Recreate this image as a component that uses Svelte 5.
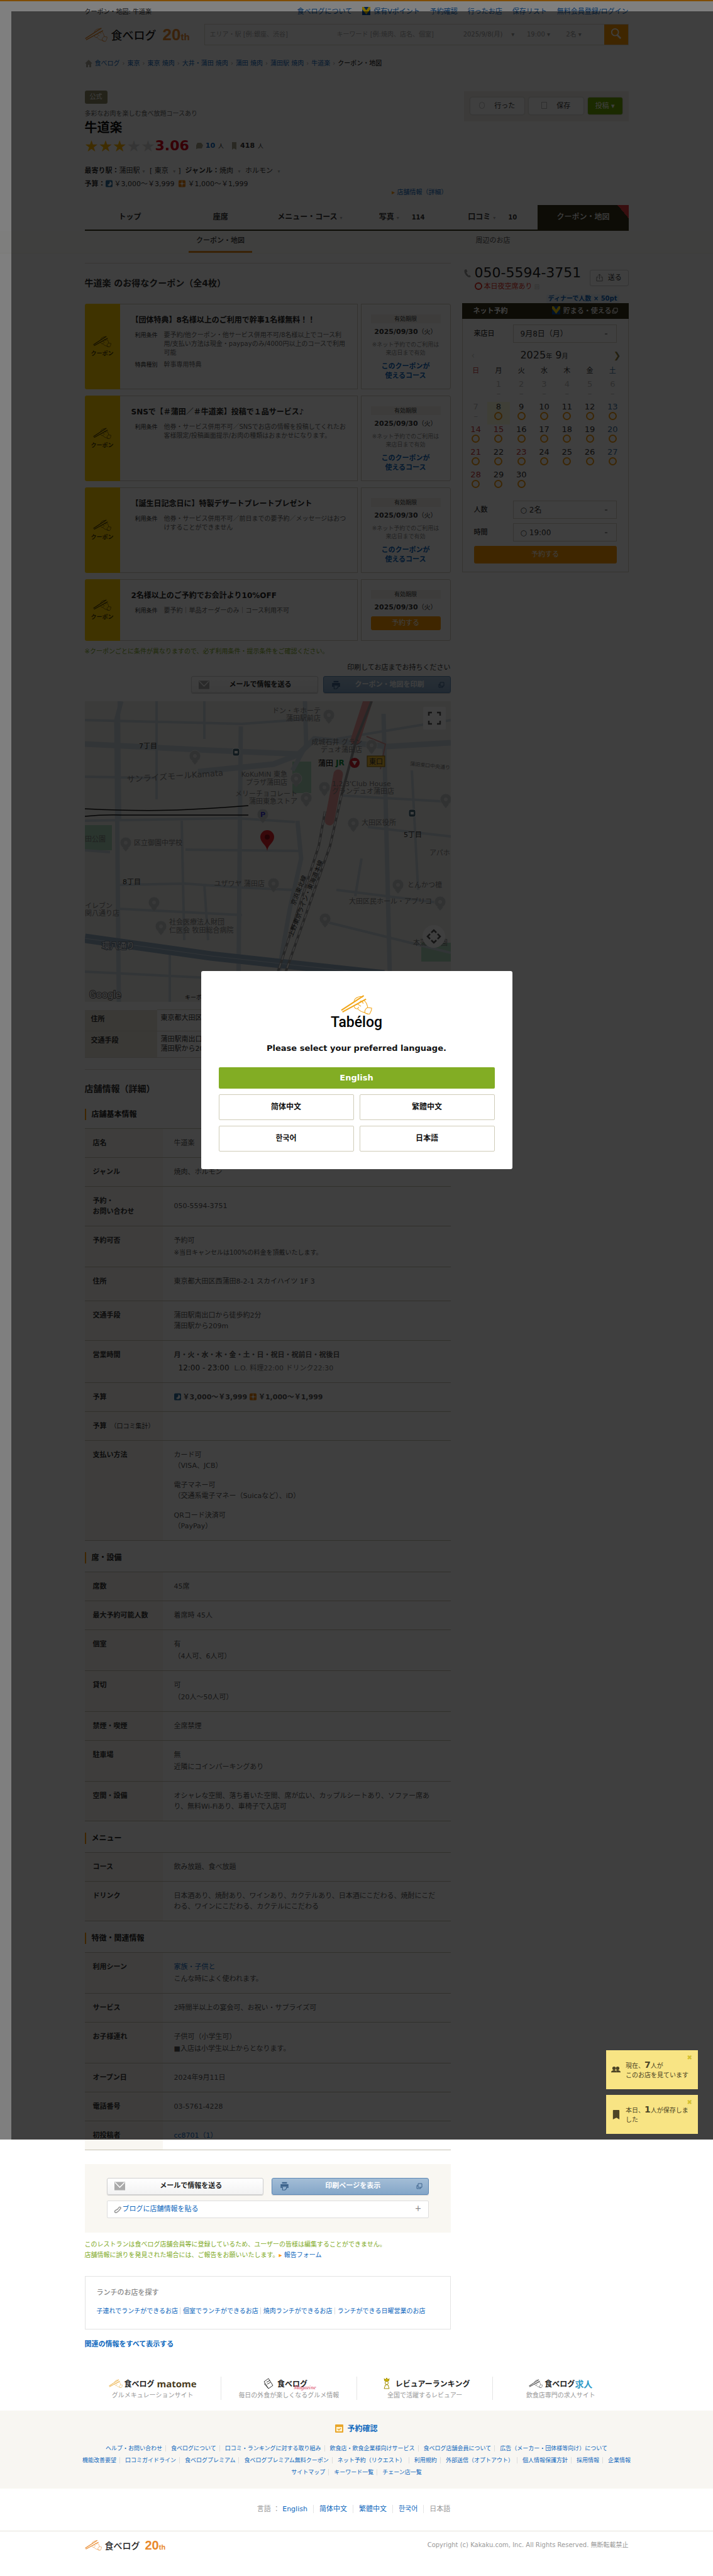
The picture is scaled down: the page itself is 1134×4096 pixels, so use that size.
<script>
	const topLinks = ['保有Vポイント', '予約確認', '行ったお店', '保存リスト', '無料会員登録/ログイン']
	const crumbs = ['食べログ', '東京', '東京 焼肉', '大井・蒲田 焼肉', '蒲田 焼肉', '蒲田駅 焼肉', '牛道楽']
	const tabs = [
		{ label: 'トップ' },
		{ label: '座席' },
		{ label: 'メニュー・コース', dot: true },
		{ label: '写真', dot: true, count: 114 },
		{ label: '口コミ', dot: true, count: 10 },
		{ label: 'クーポン・地図', active: true }
	]
	const coupons = [
		{
			title: '【団体特典】8名様以上のご利用で幹事1名様無料！！',
			text: '要予約/他クーポン・他サービス併用不可/8名様以上でコース利\n用/支払い方法は現金・paypayのみ/4000円以上のコースで利用\n可能',
			kind: '幹事専用特典'
		},
		{
			title: 'SNSで【＃蒲田／＃牛道楽】投稿で１品サービス♪',
			text: '他券・サービス併用不可／SNSでお店の情報を投稿してくれたお\n客様限定/投稿画面提示/お肉の種類はおまかせになります。'
		},
		{
			title: '【誕生日記念日に】特製デザートプレートプレゼント',
			text: '他券・サービス併用不可／前日までの要予約／メッセージはおつ\nけすることができません'
		},
		{
			title: '2名様以上のご予約でお会計より10%OFF',
			text: '要予約｜単品オーダーのみ｜コース利用不可',
			reserve: true
		}
	]
	const weekdays = ['日', '月', '火', '水', '木', '金', '土']
	const weeks = [
		[0, 1, 2, 3, 4, 5, 6],
		[7, 8, 9, 10, 11, 12, 13],
		[14, 15, 16, 17, 18, 19, 20],
		[21, 22, 23, 24, 25, 26, 27],
		[28, 29, 30, 0, 0, 0, 0]
	]
	const holidays = [15, 23]

	const sections = [
		{
			title: '店舗基本情報',
			rows: [
				{ th: '店名', lines: ['牛道楽'] },
				{ th: 'ジャンル', lines: ['焼肉、ホルモン'] },
				{ th: '予約・\nお問い合わせ', lines: ['050-5594-3751'], middle: true },
				{ th: '予約可否', lines: ['予約可'], note: '※当日キャンセルは100%の料金を頂戴いたします。', small: true },
				{ th: '住所', lines: ['東京都大田区西蒲田8-2-1 スカイハイツ 1F 3'], tall: true },
				{ th: '交通手段', lines: ['蒲田駅南出口から徒歩約2分\n蒲田駅から209m'] },
				{ th: '営業時間', hours: true },
				{ th: '予算', budget: true },
				{ th: '予算', sub: '（口コミ集計）', lines: [] },
				{
					th: '支払い方法',
					lines: ['カード可\n（VISA、JCB）', '電子マネー可\n（交通系電子マネー（Suicaなど）、iD）', 'QRコード決済可\n（PayPay）']
				}
			]
		},
		{
			title: '席・設備',
			rows: [
				{ th: '席数', lines: ['45席'] },
				{ th: '最大予約可能人数', lines: ['着席時 45人'] },
				{ th: '個室', lines: ['有'], note: '（4人可、6人可）' },
				{ th: '貸切', lines: ['可'], note: '（20人～50人可）' },
				{ th: '禁煙・喫煙', lines: ['全席禁煙'] },
				{ th: '駐車場', lines: ['無'], note: '近隣にコインパーキングあり' },
				{ th: '空間・設備', lines: ['オシャレな空間、落ち着いた空間、席が広い、カップルシートあり、ソファー席あ\nり、無料Wi-Fiあり、車椅子で入店可'] }
			]
		},
		{
			title: 'メニュー',
			rows: [
				{ th: 'コース', lines: ['飲み放題、食べ放題'] },
				{ th: 'ドリンク', lines: ['日本酒あり、焼酎あり、ワインあり、カクテルあり、日本酒にこだわる、焼酎にこだ\nわる、ワインにこだわる、カクテルにこだわる'] }
			]
		},
		{
			title: '特徴・関連情報',
			rows: [
				{ th: '利用シーン', link: '家族・子供と', note: 'こんな時によく使われます。' },
				{ th: 'サービス', lines: ['2時間半以上の宴会可、お祝い・サプライズ可'] },
				{ th: 'お子様連れ', lines: ['子供可（小学生可）'], note: '■入店は小学生以上からとなります。' },
				{ th: 'オープン日', lines: ['2024年9月11日'] },
				{ th: '電話番号', lines: ['03-5761-4228'] },
				{ th: '初投稿者', link: 'cc8701（1）' }
			]
		}
	]

	const labels = [
		{ x: 375, y: 19, text: 'ドン・キホーテ', end: true },
		{ x: 375, y: 31, text: '蒲田駅前店', end: true },
		{ x: 441, y: 69, text: '成城石井 グラン', end: true },
		{ x: 441, y: 81, text: 'デュオ蒲田店', end: true },
		{ x: 86, y: 75, text: '7丁目', dark: true },
		{ x: 322, y: 120, text: 'KoKuMiN 東急', end: true },
		{ x: 322, y: 133, text: 'プラザ蒲田店', end: true },
		{ x: 393, y: 135, text: "1,2,3'Club House" },
		{ x: 393, y: 147, text: 'グランデュオ蒲田店' },
		{ x: 338, y: 151, text: 'メリーチョコレート', end: true },
		{ x: 338, y: 163, text: '蒲田東急ストア', end: true },
		{ x: 440, y: 197, text: '大田区役所' },
		{ x: 507, y: 216, text: '5丁目', dark: true },
		{ x: 0, y: 223, text: '田公園' },
		{ x: 78, y: 229, text: '区立御園中学校' },
		{ x: 548, y: 245, text: 'アパホ' },
		{ x: 60, y: 291, text: '8丁目', dark: true },
		{ x: 286, y: 294, text: 'ユザワヤ 蒲田店', end: true },
		{ x: 513, y: 296, text: 'とんかつ檍' },
		{ x: 552, y: 322, text: '大田区民ホール・アプリコ', end: true },
		{ x: 0, y: 329, text: 'イレブン' },
		{ x: 0, y: 341, text: '関八通り店' },
		{ x: 134, y: 355, text: '社会医療法人財団' },
		{ x: 134, y: 368, text: '仁医会 牧田総合病院' },
		{ x: 27, y: 393, text: '環八通り', light: true },
		{ x: 522, y: 388, text: '本蒲田公園' }
	]
	const pins = [[388, 22], [456, 70], [175, 87], [336, 123], [381, 137], [352, 154], [427, 194], [65, 225], [300, 290], [498, 292], [565, 319], [110, 320], [382, 346], [121, 358], [574, 156], [283, 180]]

	const lunch = ['子連れでランチができるお店', '個室でランチができるお店', '焼肉ランチができるお店', 'ランチができる日曜営業のお店']
	const footLinks = [
		['ヘルプ・お問い合わせ', '食べログについて', '口コミ・ランキングに対する取り組み', '飲食店・飲食企業様向けサービス', '食べログ店舗会員について', '広告（メーカー・団体様等向け）について'],
		['機能改善要望', '口コミガイドライン', '食べログプレミアム', '食べログプレミアム無料クーポン', 'ネット予約（リクエスト）', '利用規約', '外部送信（オプトアウト）', '個人情報保護方針', '採用情報', '企業情報'],
		['サイトマップ', 'キーワード一覧', 'チェーン店一覧']
	]
	const langs = ['English', '简体中文', '繁體中文', '한국어']

	function dayClass(day, i) {
		if (day < 8) return 'past'
		if (i === 0 || holidays.includes(day)) return 'sun'
		return i === 6 ? 'sat' : ''
	}
</script>

{#snippet hand(cls)}
	<svg class={cls} viewBox="0 0 56 34" aria-hidden="true" fill="none" stroke="currentColor">
		<path stroke-width="2.4" d="M1 27 41 1M3 30 45 7" />
		<path stroke-width="1.2" d="M24 12c-1-3 2-7 6-8 4-2 8-2 9 0M41 9c4 3 6 7 7 13M27 17l3-1 6 4M24 20c0 3 3 5 6 4l2-3M30 24c5 6 9 6 12 7l6 3M48 22c-3 1-6 5-5 9M48 22l7 1c0 4-2 8-4 11l-8-2M34 11c3-1 5 1 6 4" />
	</svg>
{/snippet}

{#snippet brand(cls)}
	<span class="brand {cls}">
		{@render hand('hand')}
		<span class="brand-name">食べログ</span>
		<span class="years">20<small>th</small></span>
	</span>
{/snippet}

{#snippet moon()}
	<svg class="mini" viewBox="0 0 12 12" aria-hidden="true"><rect width="12" height="12" rx="2" fill="#2d6f9e" /><path d="M7 2a4 4 0 1 1-4 6c3 0 5-3 4-6z" fill="#fff" /></svg>
{/snippet}

{#snippet sun()}
	<svg class="mini" viewBox="0 0 12 12" aria-hidden="true"><rect width="12" height="12" rx="2" fill="#e8820c" /><circle cx="6" cy="6" r="2" fill="#fff" /><path d="M6 1v10M1 6h10" stroke="#fff" /></svg>
{/snippet}

{#snippet vmark()}
	<svg class="vmark" viewBox="0 0 14 14" aria-hidden="true"><rect width="14" height="14" fill="#0a4da2" /><path d="M0 0h3l4 6 4-6h3v4l-7 9-7-9z" fill="#ffd400" /></svg>
{/snippet}

{#snippet popup()}
	<svg class="popup" viewBox="0 0 10 10" aria-hidden="true" fill="none" stroke="currentColor"><path d="M3 1h6v6H3zM3 4H1v5h6V7" /></svg>
{/snippet}

{#snippet mailButton()}
	<button class="btn mail" type="button">
		<svg viewBox="0 0 18 14" aria-hidden="true"><rect width="18" height="14" fill="#aaa" /><path d="m1 1 8 8 8-8" fill="none" stroke="#fff" stroke-width="1.5" /></svg>
		<span>メールで情報を送る</span>
	</button>
{/snippet}

{#snippet printButton(label)}
	<button class="btn print" type="button">
		<svg viewBox="0 0 18 18" aria-hidden="true" fill="#3c638c"><path d="M4 1h10v3H4zM1 5h16v8h-3V9H4v4H1z" /><path d="M5 10h8v4l-3 3H5z" fill="none" stroke="#3c638c" stroke-width="1.5" /></svg>
		<span>{label}</span>
		{@render popup()}
	</button>
{/snippet}

<div class="page">
	<header class="wrap">
		<div class="top">
			<span>クーポン・地図: 牛道楽</span>
			<nav>
				<a href="#about">食べログについて</a>
				{#each topLinks as link, i}
					<a href="#top{i}">{#if i === 0}{@render vmark()}{/if}{link}</a>
				{/each}
			</nav>
		</div>
		<div class="head">
			<a href="#home" aria-label="食べログ">{@render brand('')}</a>
			<form class="search">
				<input class="area" aria-label="エリア・駅" placeholder="エリア・駅 [例:銀座、渋谷]" />
				<input class="word" aria-label="キーワード" placeholder="キーワード [例:焼肉、店名、個室]" />
				<button type="button" class="date">2025/9/8(月)<i>▾</i></button>
				<button type="button" class="time">19:00 <i>▾</i></button>
				<button type="button" class="num">2名 <i>▾</i></button>
				<button type="submit" class="go" aria-label="検索">
					<svg viewBox="0 0 20 20" aria-hidden="true" fill="none" stroke="#fff" stroke-width="2"><circle cx="8" cy="8" r="6" /><path d="m12 13 6 6" stroke-width="3" /></svg>
				</button>
			</form>
		</div>
		<nav class="crumbs">
			<svg viewBox="0 0 12 12" aria-hidden="true"><path d="M6 0 0 6h2v6h3V8h2v4h3V6h2z" fill="#a8a499" /></svg>
			{#each crumbs as crumb, i}
				<a href="#crumb{i}">{crumb}</a><i>›</i>
			{/each}
			<b>クーポン・地図</b>
		</nav>

		<div class="shop">
			<div class="shop-main">
				<span class="badge">公式</span>
				<p class="catch">多彩なお肉を楽しむ食べ放題コースあり</p>
				<h1>牛道楽</h1>
				<div class="rating">
					<span class="stars">★★★<i>★★</i></span>
					<b class="score">3.06</b>
					<svg viewBox="0 0 12 12" aria-hidden="true"><path d="M3 1h6l3 4-2 5H4l-3 1V5z" fill="#a5a28a" /></svg>
					<a href="#reviews">10</a><small>人</small>
					<svg viewBox="0 0 12 12" aria-hidden="true"><path d="M3 0h7v12L6 10l-3 2z" fill="#a5a28a" /></svg>
					<strong>418</strong><small>人</small>
				</div>
				<p class="fact"><b>最寄り駅：</b>蒲田駅<i>▾</i> [ 東京 <i>▾</i>] &nbsp;<b>ジャンル：</b>焼肉 <i>▾</i> ホルモン <i>▾</i></p>
				<div class="fact-row">
					<p class="fact"><b>予算：</b>{@render moon()}￥3,000～￥3,999 &nbsp;{@render sun()}￥1,000～￥1,999</p>
					<a class="detail" href="#detail"><i>▸</i> 店舗情報（詳細）</a>
				</div>
			</div>
			<div class="acts">
				<button type="button"><span class="ok"></span>行った</button>
				<button type="button"><span class="mark"></span>保存</button>
				<button type="button" class="post">投稿 ▾</button>
			</div>
		</div>

		<nav class="tabs">
			{#each tabs as tab, i}
				<a href="#tab{i}" class:active={tab.active}>
					{tab.label}{#if tab.dot}<i>▾</i>{/if}{#if tab.count}<small>{tab.count}</small>{/if}
				</a>
			{/each}
		</nav>
	</header>

	<div class="subnav">
		<nav class="wrap">
			<a class="current" href="#coupon">クーポン・地図</a>
			<a class="near" href="#near">周辺のお店</a>
		</nav>
	</div>

	<div class="wrap cols">
		<main>
			<h2 class="coupon-head">牛道楽 のお得なクーポン（全4枚）</h2>
			<div class="coupons">
				{#each coupons as coupon}
					<article class="coupon">
						<div class="stub">{@render hand('hand')}<b>クーポン</b></div>
						<div class="terms">
							<h3>{coupon.title}</h3>
							<dl>
								<dt>利用条件</dt>
								<dd>{coupon.text}</dd>
								{#if coupon.kind}
									<dt>特典種別</dt>
									<dd>{coupon.kind}</dd>
								{/if}
							</dl>
						</div>
						<div class="limit">
							<span class="limit-label">有効期限</span>
							<p class="until"><b>2025/09/30</b>（火）</p>
							{#if coupon.reserve}
								<button type="button" class="orange">予約する</button>
							{:else}
								<p class="until-note">※ネット予約でのご利用は<br />来店日まで有効</p>
								<a href="#course">このクーポンが<br />使えるコース</a>
							{/if}
						</div>
					</article>
				{/each}
			</div>
			<p class="caution">※クーポンごとに条件が異なりますので、必ず利用条件・提示条件をご確認ください。</p>
			<p class="bring">印刷してお店までお持ちください</p>
			<div class="tools">
				{@render mailButton()}
				{@render printButton('クーポン・地図を印刷')}
			</div>

			<div class="map">
				<svg viewBox="0 0 582 478" preserveAspectRatio="xMidYMid slice">
					<rect width="582" height="478" fill="#eeede9" />
					<path d="M0 197h43v40H0zM330 96h30v50h-30zM535 384h47v30h-47z" fill="#a9d6b8" />
					<g fill="none" stroke="#cbd5dc">
						<path stroke-width="9" d="M0 68 200 78 340 84 365 60 480 72 582 66M342 84 300 100 180 112" />
						<path stroke-width="7" d="M58 0 50 30 54 478M475 20 486 478M350 0 352 70 330 110M338 190 344 250 326 330 300 478M248 40 244 478" />
						<path stroke-width="4" d="M0 30 250 36 360 28M114 0V156M0 120 114 122M190 0V60M154 190 158 380M0 237 40 240M160 236 340 238M54 292 160 290 245 296 330 300M190 292 196 380M54 330 250 340M0 190 240 186 334 192M400 60 582 30M410 150 582 160M450 200 582 215M440 250 430 310M400 300 560 320M380 350 582 400M0 430 300 445M135 400V478M54 0 56 190M520 110 530 300" />
					</g>
					<path d="m0 377 200 28 276 30" fill="none" stroke="#96adc2" stroke-width="15" />
					<path d="m0 377 200 28 276 30" fill="none" stroke="#c5d2de" stroke-width="1" />
					<path d="M450 0 430 62M403 116l-14 74" fill="none" stroke="#eb9a98" stroke-width="15" stroke-linecap="round" />
					<path d="m448 56 30 12-8 40" fill="none" stroke="#d99a9a" stroke-width="2" />
					<g fill="none" stroke="#999">
						<path stroke-width="4" d="M456 0 432 60 408 150 390 230 316 440 306 478" />
						<path stroke-width="4" d="M382 175 372 230 304 440 294 478" />
						<path stroke="#eee" stroke-dasharray="8 6" stroke-width="2" d="M382 175 372 230 304 440 294 478M408 150 390 230 316 440" />
						<path stroke="#111" stroke-width="1.5" d="M0 171q80 4 147 2 50-2 113-7M0 183q30-3 60-2h200" />
					</g>
					{#each pins as [x, y]}
						<circle cx={x} cy={y} r="9" fill="#c4c8c8" stroke="#e9e9e9" />
						<path d="m{x - 5} {y + 8} 5 6 5-6z" fill="#c4c8c8" />
						<circle cx={x} cy={y} r="3" fill="#e6e6e6" />
					{/each}
					{#each labels as label}
						<text x={label.x} y={label.y} text-anchor={label.end ? 'end' : 'start'} class:dark={label.dark} class:light={label.light}>{label.text}</text>
					{/each}
					<text x="67" y="129" transform="rotate(-4 67 129)" class="street">サンライズモールKamata</text>
					<text x="517" y="102" transform="rotate(6 517 102)" class="tiny">蒲田東口中央通り</text>
					<text x="330" y="375" transform="rotate(-68 330 375)" class="rail">上野東京ライン・東海道本線</text>
					<text x="334" y="325" transform="rotate(-68 334 325)" class="rail">京浜東北線</text>
					<text x="371" y="103" class="station">蒲田</text>
					<text x="399" y="102" class="jr">JR</text>
					<circle cx="429" cy="98" r="8" fill="#d3202f" />
					<path d="m425 95 4 7 4-7z" fill="#fff" />
					<rect x="449" y="87" width="28" height="17" fill="#f3bd30" stroke="#8a6400" />
					<text x="452" y="100" class="dark">東口</text>
					<g fill="#476a78" stroke="#fff"><rect x="235" y="75" width="11" height="12" rx="3" /><rect x="515" y="172" width="11" height="12" rx="3" /></g>
					<path d="M238 79h5v4h-5zM518 176h5v4h-5z" fill="#fff" />
					<text x="279" y="184" class="park">P</text>
					<path d="M290 238c-1-10-11-13-11-22a11 11 0 0 1 22 0c0 9-10 12-11 22z" fill="#e0202a" />
					<circle cx="290" cy="216" r="4" fill="#8c0d15" />
					<rect x="538" y="9" width="36" height="36" rx="2" fill="#fff" />
					<path d="M547 23v-5h5M560 18h5v5M547 31v5h5M560 36h5v-5" fill="none" stroke="#555" stroke-width="2.5" />
					<circle cx="555" cy="374" r="18" fill="#fff" />
					<path d="m551 368 4-4 4 4M551 380l4 4 4-4M549 370l-4 4 4 4M561 370l4 4-4 4" fill="none" stroke="#555" stroke-width="2.5" />
					<text x="7" y="472" class="google">Google</text>
					<text x="159" y="474" class="keys">キーボード ショートカット</text>
				</svg>
			</div>

			<table class="access">
				<tbody>
					<tr><th>住所</th><td>東京都大田区西蒲田8-2-1 スカイハイツ 1F 3</td></tr>
					<tr><th>交通手段</th><td>蒲田駅南出口から徒歩約2分<br />蒲田駅から209m</td></tr>
				</tbody>
			</table>

			<h2 class="info-head">店舗情報（詳細）</h2>
			{#each sections as section}
				<section class="info">
					<h3>{section.title}</h3>
					<table>
						<tbody>
							{#each section.rows as row}
								<tr class:middle={row.middle} class:tall={row.tall}>
									<th>{row.th}{#if row.sub}<small>{row.sub}</small>{/if}</th>
									<td>
										{#each row.lines || [] as line}<p>{line}</p>{/each}
										{#if row.link}<p><a href="#link">{row.link}</a></p>{/if}
										{#if row.note}<p class="note" class:small={row.small}>{row.note}</p>{/if}
										{#if row.hours}
											<p><b>月・火・水・木・金・土・日・祝日・祝前日・祝後日</b></p>
											<p class="hours">12:00 - 23:00 <span>L.O. 料理22:00 ドリンク22:30</span></p>
										{/if}
										{#if row.budget}
											<p><b>{@render moon()}￥3,000～￥3,999 {@render sun()}￥1,000～￥1,999</b></p>
										{/if}
									</td>
								</tr>
							{/each}
						</tbody>
					</table>
				</section>
			{/each}

			<div class="panel">
				<div class="pair">
					{@render mailButton()}
					{@render printButton('印刷ページを表示')}
				</div>
				<a class="blog" href="#blog">
					<svg viewBox="0 0 14 14" aria-hidden="true" fill="none" stroke="#999" stroke-width="1.8"><path d="m6 8 4-5a2 2 0 0 1 3 2l-4 5M8 6l-5 3a2 2 0 0 0 2 4l4-3" /></svg>
					ブログに店舗情報を貼る<b>＋</b>
				</a>
			</div>
			<p class="report">このレストランは食べログ店舗会員等に登録しているため、ユーザーの皆様は編集することができません。<br />店舗情報に誤りを発見された場合には、ご報告をお願いいたします。<i>▸</i> <a href="#report">報告フォーム</a></p>
			<section class="lunch">
				<h3>ランチのお店を探す</h3>
				<p>{#each lunch as item, i}<a href="#lunch{i}">{item}</a>{/each}</p>
			</section>
			<a class="related" href="#related">関連の情報をすべて表示する</a>
		</main>

		<aside>
			<div class="tel">
				<div>
					<p class="number"><svg viewBox="0 0 12 14" aria-hidden="true"><path d="m1 1 3-1 2 4-2 2 4 5 2-1 2 3-3 1C4 13-1 5 1 1z" fill="#999" /></svg>050-5594-3751</p>
					<p class="seat"><span></span>本日夜空席あり <i>回</i></p>
				</div>
				<button type="button">
					<svg viewBox="0 0 12 14" aria-hidden="true" fill="none" stroke="#777"><path d="M4 6H1v7h10V6H8M6 10V1M3 4l3-3 3 3" /></svg>
					送る
				</button>
			</div>
			<div class="booking">
				<span class="bubble">ディナーで人数 × 50pt</span>
				<div class="booking-head"><b>ネット予約</b><span>{@render vmark()}貯まる・使える{@render popup()}</span></div>
				<div class="field"><label for="day">来店日</label><select id="day"><option>9月8日（月）</option></select></div>
				<div class="month"><button type="button" class="off" aria-label="前の月">‹</button><span>2025<small>年</small> 9<small>月</small></span><button type="button" aria-label="次の月">❯</button></div>
				<table class="cal">
					<thead>
						<tr>{#each weekdays as day}<th>{day}</th>{/each}</tr>
					</thead>
					<tbody>
						{#each weeks as week}
							<tr>
								{#each week as day, i}
									<td class={dayClass(day, i)} class:today={day === 8}>
										{#if day}
											{day}
											{#if day < 8}<i>–</i>{:else}<span class="open"></span>{/if}
										{/if}
									</td>
								{/each}
							</tr>
						{/each}
					</tbody>
				</table>
				<div class="field"><label for="people">人数</label><select id="people"><option>○ 2名</option></select></div>
				<div class="field"><label for="hour">時間</label><select id="hour"><option>○ 19:00</option></select></div>
				<button type="button" class="orange">予約する</button>
			</div>
		</aside>
	</div>

	<div class="wrap sites">
		<a href="#matome"><span class="site-logo">{@render hand('hand yellow')}食べログ<em class="matome">matome</em></span>グルメキュレーションサイト</a>
		<a href="#magazine"><span class="site-logo">
			<svg viewBox="0 0 18 18" aria-hidden="true" fill="none" stroke="#333"><path d="m2 6 7-5 7 11-7 5zM6 7l5-3M7 10l5-3M9 17l-7-8" /></svg>食べログ<em class="magazine">Magazine</em></span>毎日の外食が楽しくなるグルメ情報</a>
		<a href="#ranking"><span class="site-logo">
			<svg viewBox="0 0 12 18" aria-hidden="true" fill="none" stroke="#a18d00"><path d="m2 1 1 4h6l1-4-2 2-2-3-2 3z" fill="#d8bd00" /><circle cx="6" cy="8" r="2.5" /><path d="M4 11h4l2 6H2z" /></svg>レビュアーランキング</span>全国で活躍するレビュアー</a>
		<a href="#jobs"><span class="site-logo">{@render hand('hand')}食べログ<em class="jobs">求人</em></span>飲食店専門の求人サイト</a>
	</div>

	<div class="links">
		<a class="confirm" href="#confirm">
			<svg viewBox="0 0 13 13" aria-hidden="true"><rect width="13" height="13" rx="1" fill="#e9a62b" /><path d="M2 4h9v7H2z" fill="#fff3d0" /><path d="m4 7 2 2 3-3" fill="none" stroke="#e9a62b" stroke-width="1.5" /></svg>
			予約確認
		</a>
		{#each footLinks as line}
			<p>{#each line as link, i}<a href="#foot{i}">{link}</a>{/each}</p>
		{/each}
	</div>
	<p class="langs">言語 ：{#each langs as lang}<a href="#{lang}">{lang}</a>{/each}<span>日本語</span></p>
	<footer>
		<div class="wrap">
			{@render brand('small')}
			<small>Copyright (c) Kakaku.com, Inc. All Rights Reserved. 無断転載禁止</small>
		</div>
	</footer>

	<div class="veil"></div>
	<div class="veil inner"></div>
	<div class="stage">
		<div class="dialog" role="dialog" aria-label="Language">
			{@render hand('hand')}
			<p class="wordmark">Tabélog</p>
			<h2>Please select your preferred language.</h2>
			<div class="choices">
				<button type="button" class="english">English</button>
				<button type="button" lang="zh-CN">简体中文</button>
				<button type="button" lang="zh-TW">繁體中文</button>
				<button type="button" lang="ko">한국어</button>
				<button type="button" lang="ja">日本語</button>
			</div>
		</div>
		<div class="toasts">
			<div class="toast">
				<svg viewBox="0 0 16 12" aria-hidden="true" fill="#4d4526"><circle cx="5" cy="4" r="3" /><circle cx="11" cy="4" r="3" /><path d="M0 11c0-3 3-3 4-4h2c1 1 3 1 3 4zM9 11c0-2 0-3-1-3l2-1h2c1 1 4 1 4 4z" /></svg>
				<p>現在、<b>7</b>人が<br />このお店を見ています</p>
				<button type="button" aria-label="閉じる">✖</button>
			</div>
			<div class="toast">
				<svg viewBox="0 0 16 16" aria-hidden="true" fill="#4d4526"><path d="M3 1q0-1 1-1h9q1 0 1 1v15l-5-3-6 3z" /></svg>
				<p>本日、<b>1</b>人が保存しま<br />した</p>
				<button type="button" aria-label="閉じる">✖</button>
			</div>
		</div>
	</div>
</div>

<style>
	:global(body) {
		margin: 0;
		background: #fff;
	}

	.page {
		position: relative;
		border-top: 2px solid #ff9900;
		color: #333;
		font: 11px/16px "DejaVu Sans", "Noto Sans CJK JP", sans-serif;
	}

	.page * {
		box-sizing: border-box;
	}

	.wrap {
		width: 100%;
		max-width: 865px;
		margin: 0 auto;
	}

	p,
	h1,
	h2,
	h3,
	dl,
	dd {
		margin: 0;
	}

	i,
	em {
		font-style: normal;
	}

	i,
	small {
		line-height: 1;
	}

	a {
		color: #0d67bd;
		text-decoration: none;
	}

	button,
	input,
	select {
		margin: 0;
		padding: 0;
		border: 0;
		background: none;
		color: inherit;
		font: inherit;
		appearance: none;
	}

	table {
		width: 100%;
		border-collapse: collapse;
	}

	/* header */
	.top {
		display: flex;
		justify-content: space-between;
		padding-top: 9px;
		font-size: 10px;
	}

	.top nav {
		display: flex;
		gap: 16px;
		font-size: 11px;
	}

	.vmark {
		width: 13px;
		height: 13px;
		margin-right: 5px;
		vertical-align: -2px;
	}

	.head {
		display: flex;
		justify-content: space-between;
		align-items: center;
		margin-top: 11px;
	}

	.brand {
		display: flex;
		align-items: center;
		color: #e8892c;
	}

	.brand .hand {
		width: 36px;
		height: 24px;
	}

	.brand-name {
		margin: 0 10px 0 6px;
		color: #222;
		font: 500 18px/24px "Noto Sans CJK JP", sans-serif;
	}

	.years {
		font: bold 26px/24px "Liberation Sans", sans-serif;
	}

	.years small {
		font-size: 15px;
	}

	.small .hand {
		width: 27px;
		height: 18px;
	}

	.small .brand-name {
		margin: 0 8px 0 5px;
		font-size: 14px;
		line-height: 20px;
	}

	.small .years {
		font-size: 20px;
		line-height: 20px;
	}

	.small .years small {
		font-size: 11px;
	}

	.search {
		display: flex;
		width: 675px;
		height: 34px;
		border: 1px solid #ddd8ce;
		color: #999;
		font-size: 10px;
	}

	.search input {
		padding-left: 8px;
	}

	.search input::placeholder {
		color: #a9a9a9;
	}

	.area {
		width: 202px;
	}

	.word {
		width: 202px;
	}

	.date {
		width: 96px;
	}

	.time {
		width: 62px;
	}

	.num {
		width: 50px;
	}

	.date i {
		margin-left: 14px;
	}

	.go {
		width: 38px;
		margin-left: auto;
		background: #ff9900;
	}

	.go svg {
		width: 18px;
	}

	.crumbs {
		display: flex;
		gap: 4px;
		align-items: center;
		margin-top: 21px;
		font-size: 10px;
		white-space: nowrap;
	}

	.crumbs svg {
		width: 12px;
	}

	.crumbs i {
		color: #999;
	}

	.crumbs b {
		font-weight: 500;
	}

	.shop {
		display: flex;
		justify-content: space-between;
		align-items: flex-start;
		margin-top: 35px;
	}

	.shop-main {
		width: 577px;
	}

	.badge {
		display: block;
		width: 36px;
		height: 21px;
		border-radius: 3px;
		background: #8e8a66;
		color: #fff;
		font-size: 10px;
		line-height: 20px;
		text-align: center;
	}

	.catch {
		margin-top: 8px;
		color: #666;
		font-size: 10px;
	}

	h1 {
		color: #111;
		font-size: 20px;
		line-height: 28px;
	}

	.rating {
		display: flex;
		align-items: center;
		height: 28px;
		margin-top: 1px;
	}

	.stars {
		width: 112px;
		color: #ffb400;
		font-size: 25px;
	}

	.stars i {
		color: #d6d6d6;
	}

	.score {
		margin-right: 10px;
		color: #d9001b;
		font-size: 22px;
	}

	.rating svg {
		width: 12px;
		margin-right: 4px;
	}

	.rating a {
		font-weight: bold;
	}

	.rating small {
		margin: 0 10px 0 5px;
		font-size: 9px;
	}

	.fact {
		margin-top: 18px;
	}

	.fact i,
	.tabs i {
		margin: 0 4px;
		color: #aaa;
		font-size: 8px;
	}

	.fact-row {
		display: flex;
		justify-content: space-between;
		align-items: flex-start;
		margin-top: 5px;
	}

	.fact-row .fact {
		margin: 0;
	}

	.mini {
		width: 11px;
		height: 12px;
		margin-right: 3px;
		vertical-align: -2px;
	}

	.detail {
		margin-top: 13px;
		font-size: 10px;
	}

	.detail i,
	.report i {
		color: #f90;
	}

	.acts {
		display: flex;
		gap: 7px;
		width: 262px;
		margin-top: 1px;
		padding: 10px 10px 11px;
		background: #f2efe9;
	}

	.acts button {
		flex: 1;
		height: 27px;
		border-radius: 3px;
		background: #fff;
		box-shadow: 0 0 2px #999;
	}

	.acts span {
		display: inline-block;
		width: 9px;
		height: 11px;
		margin-right: 15px;
		border: 1px solid #bbb;
		vertical-align: -1px;
	}

	.acts .ok {
		border-radius: 6px;
	}

	.acts .post {
		flex: 0 0 55px;
		background: #6fa800;
		color: #fff;
	}

	.tabs {
		display: grid;
		grid-template-columns: repeat(6, 1fr);
		height: 41px;
		margin-top: 12px;
		border-bottom: 2px solid #35301a;
	}

	.tabs a {
		color: #333;
		font-size: 12px;
		font-weight: bold;
		line-height: 39px;
		text-align: center;
	}

	.tabs small {
		margin-left: 16px;
		font-size: 10px;
	}

	.tabs .active {
		height: 41px;
		background: linear-gradient(50deg, transparent 90%, #e03a3e 90%) #35301a;
		color: #fff;
		font-weight: 500;
	}

	.subnav {
		border-bottom: 1px solid #f6f4ef;
		background: #fdfcfa;
	}

	.subnav nav {
		display: grid;
		grid-template-columns: 432px 1fr;
		line-height: 32px;
	}

	.current {
		justify-self: center;
		width: 101px;
		border-bottom: 3px solid #e58a1f;
		color: #333;
		font-weight: 500;
		text-align: center;
	}

	.near {
		margin-left: 190px;
		color: #555;
	}

	.cols {
		display: grid;
		grid-template-columns: 582px 265px;
		justify-content: space-between;
	}

	/* coupons */
	.coupon-head {
		margin-top: 15px;
		padding-top: 21px;
		border-top: 1px solid #ddd8ce;
		font-size: 14px;
		line-height: 20px;
	}

	.coupons {
		display: grid;
		gap: 10px;
		margin-top: 23px;
	}

	.coupon {
		display: grid;
		grid-template-columns: 56px 378px 148px;
	}

	.stub {
		display: grid;
		align-content: center;
		justify-items: center;
		gap: 4px;
		border-radius: 3px 0 0 3px;
		background: #ffcc00;
		color: #4a3c00;
		font-size: 9px;
		line-height: 12px;
	}

	.stub .hand {
		width: 29px;
		height: 18px;
	}

	.terms,
	.limit {
		padding: 16px 10px 13px 18px;
		border: 1px solid #cdc9bc;
	}

	.terms {
		border-left: 0;
	}

	.terms h3 {
		color: #222;
		font-size: 12px;
		line-height: 18px;
		white-space: nowrap;
	}

	dl {
		display: grid;
		grid-template-columns: 46px 292px;
		row-gap: 5px;
		margin: 8px 0 0 6px;
		font-size: 10px;
		line-height: 14px;
	}

	dt {
		font-size: 9px;
	}

	dd {
		color: #666;
		white-space: pre;
	}

	.limit {
		margin-left: 5px;
		padding: 16px 0 13px;
		border-radius: 0 3px 3px 0;
		text-align: center;
	}

	.limit-label {
		display: block;
		width: 111px;
		margin: 0 auto 6px;
		background: #f5f3ee;
		font-size: 9px;
		line-height: 14px;
	}

	.until {
		font-size: 10px;
		line-height: 15px;
	}

	.until b {
		font-size: 11px;
	}

	.until-note {
		margin: 7px 0;
		color: #888;
		font-size: 9px;
		line-height: 13px;
	}

	.limit a {
		display: block;
		font-weight: bold;
		line-height: 15px;
	}

	.orange {
		display: block;
		border-radius: 3px;
		background: #ff9900;
		color: #fff;
	}

	.limit .orange {
		width: 111px;
		height: 22px;
		margin: 7px auto 3px;
	}

	.caution {
		margin-top: 9px;
		color: #7faa1f;
		font-size: 10px;
	}

	.bring {
		margin-top: 10px;
		text-align: right;
	}

	.tools {
		display: grid;
		grid-template-columns: 202px 203px;
		gap: 8px;
		justify-content: end;
		margin-top: 5px;
	}

	.btn {
		display: flex;
		align-items: center;
		height: 27px;
		padding: 0 9px 0 11px;
		border: 1px solid #d0d0d0;
		border-radius: 3px;
		background: linear-gradient(#fff, #f2f2f2);
		box-shadow: 0 1px 1px #ccc;
		color: #222;
		font-weight: 500;
	}

	.btn span {
		flex: 1;
		font-weight: bold;
		text-align: center;
	}

	.btn svg {
		width: 17px;
		height: 14px;
	}

	.print {
		border-color: #5d88b5;
		background: linear-gradient(#a3bdd6, #84a6c8);
		color: #fff;
	}

	.print .popup {
		width: 10px;
		color: #3c638c;
	}

	.popup {
		width: 10px;
		height: 10px;
		vertical-align: -1px;
	}

	/* map */
	.map {
		margin-top: 13px;
	}

	.map svg {
		display: block;
		width: 100%;
		height: 478px;
	}

	.map text {
		fill: #808080;
		font-size: 11px;
	}

	.map .dark {
		fill: #333;
	}

	.map .light {
		fill: #fff;
		stroke: #6f7f8c;
		stroke-width: 2px;
		paint-order: stroke;
		font-size: 13px;
	}

	.map .street {
		font-size: 13px;
	}

	.map .tiny {
		font-size: 8px;
	}

	.map .rail {
		fill: #333;
		font-size: 10px;
	}

	.map .station {
		fill: #111;
		font-size: 12px;
		font-weight: 500;
	}

	.map .jr {
		fill: #0b8a3c;
		font-size: 12px;
		font-weight: bold;
	}

	.map .park {
		fill: #3030c8;
		font-weight: bold;
	}

	.map .google {
		fill: #fff;
		stroke: #666;
		stroke-width: 2px;
		paint-order: stroke;
		font: 16px Roboto, sans-serif;
	}

	.map .keys {
		fill: #222;
		font-size: 9px;
	}

	.access {
		margin-top: 12px;
		line-height: 15px;
	}

	.access th {
		width: 115px;
		padding: 7px 10px 11px;
		border-bottom: 1px solid #ddd8ce;
		background: #e9e4d8;
		text-align: left;
		vertical-align: top;
	}

	.access td {
		padding: 5px 6px 6px;
		border: solid #ddd8ce;
		border-width: 1px 0;
		vertical-align: top;
	}

	/* shop details */
	.info-head {
		margin-top: 18px;
		padding-top: 20px;
		border-top: 1px solid #ddd8ce;
		font-size: 14px;
		line-height: 20px;
	}

	.info {
		margin-top: 18px;
	}

	.info-head + .info {
		margin-top: 22px;
	}

	.info h3 {
		margin-bottom: 13px;
		padding-left: 9px;
		border-left: 2px solid #ff9900;
		color: #222;
		font-size: 12px;
		line-height: 18px;
	}

	.info table {
		border-top: 1px solid #c5c1b2;
		line-height: 17px;
	}

	.info tr {
		border-bottom: 1px solid #c5c1b2;
	}

	.info th {
		width: 124px;
		padding: 14px 0 14px 13px;
		background: #f9f7f2;
		text-align: left;
		vertical-align: top;
		white-space: pre;
	}

	.info th small {
		margin-left: 6px;
		font-size: 10px;
		font-weight: normal;
	}

	.info td {
		padding: 14px 0 14px 18px;
		color: #555;
		vertical-align: top;
	}

	.info td p {
		white-space: pre;
	}

	.info td p + p {
		margin-top: 14px;
	}

	.info td p + .note {
		margin-top: 2px;
	}

	.info td p + .hours {
		margin-top: 4px;
		margin-left: 7px;
		color: #333;
		font-size: 12px;
	}

	.info .small {
		font-size: 10px;
	}

	.hours span {
		margin-left: 4px;
		color: #777;
		font-size: 11px;
	}

	.info .middle td {
		vertical-align: middle;
	}

	.info .tall td {
		padding-bottom: 22px;
	}

	.panel {
		margin-top: 22px;
		padding: 22px 35px 23px;
		background: #f9f7f2;
	}

	.pair {
		display: grid;
		grid-template-columns: 1fr 1fr;
		gap: 13px;
	}

	.blog {
		display: flex;
		gap: 2px;
		align-items: center;
		height: 28px;
		margin-top: 9px;
		padding: 0 10px;
		border: 1px solid #ddd;
		border-radius: 2px;
		background: #fff;
	}

	.blog svg {
		width: 12px;
	}

	.blog b {
		margin-left: auto;
		color: #888;
	}

	.report {
		margin-top: 10px;
		color: #7faa1f;
		font-size: 10px;
		line-height: 17px;
		white-space: nowrap;
	}

	.lunch {
		margin-top: 25px;
		padding: 17px 18px 20px;
		border: 1px solid #e3e3e3;
	}

	.lunch h3 {
		color: #888;
		font-size: 11px;
		font-weight: 500;
		line-height: 18px;
	}

	.lunch p {
		margin-top: 12px;
		font-size: 10px;
		white-space: nowrap;
	}

	.lunch a + a {
		margin-left: 3px;
		padding-left: 4px;
		border-left: 1px solid #ddd;
	}

	.related {
		display: block;
		margin-top: 16px;
		font-weight: bold;
	}

	/* booking column */
	.tel {
		display: flex;
		justify-content: space-between;
		padding: 17px 0 0 3px;
	}

	.number {
		color: #222;
		font-size: 22px;
		line-height: 28px;
	}

	.number svg {
		width: 11px;
		height: 13px;
		margin-right: 6px;
	}

	.seat {
		padding-left: 17px;
		color: #e02b20;
		line-height: 16px;
	}

	.seat span {
		display: inline-block;
		width: 12px;
		height: 12px;
		margin-right: 3px;
		border: 2px solid #e02b20;
		border-radius: 6px;
		vertical-align: -2px;
	}

	.seat i {
		color: #bbb;
		font-size: 8px;
	}

	.tel button {
		width: 62px;
		height: 26px;
		margin-top: 9px;
		border: 1px solid #ccc;
		border-radius: 3px;
	}

	.tel button svg {
		width: 11px;
		margin-right: 4px;
		vertical-align: -3px;
	}

	.booking {
		position: relative;
		margin-top: 18px;
		padding-bottom: 13px;
		border: 1px solid #d5d1c6;
		border-top: 0;
	}

	.bubble {
		position: absolute;
		top: -14px;
		right: 14px;
		padding: 0 3px;
		border-radius: 2px;
		background: #eef6fc;
		color: #0d67bd;
		font-size: 10px;
		font-weight: bold;
		line-height: 14px;
	}

	.booking-head {
		display: flex;
		justify-content: space-between;
		margin: 0 -1px 9px;
		padding: 0 17px 0 18px;
		background: #35301a;
		color: #fff;
		font-size: 11px;
		line-height: 25px;
	}

	.booking-head span {
		font-weight: 500;
	}

	.field {
		display: grid;
		grid-template-columns: 62px 165px;
		align-items: center;
		margin: 0 0 7px 18px;
		font-weight: 500;
	}

	.field select {
		height: 29px;
		padding: 0 11px;
		border: 1px solid #d5d1c6;
		background: linear-gradient(#999, #999) no-repeat right 14px center / 4px 2px;
		font-size: 12px;
		font-weight: normal;
	}

	.month {
		display: flex;
		justify-content: space-between;
		height: 20px;
		margin-top: 10px;
		padding: 0 11px 0 14px;
		font-size: 16px;
		line-height: 20px;
	}

	.month small {
		font-size: 10px;
	}

	.month button {
		color: #8a7d3c;
		font-size: 14px;
	}

	.month .off {
		color: #ccc;
	}

	.cal {
		width: 254px;
		margin: 8px 0 13px 3px;
		table-layout: fixed;
		font-size: 13px;
	}

	.cal th {
		height: 20px;
		padding: 0;
		font-size: 11px;
		font-weight: normal;
		line-height: 14px;
		vertical-align: top;
	}

	.cal th:first-child,
	.cal .sun {
		color: #c5363a;
	}

	.cal th:last-child,
	.cal .sat {
		color: #3a6f9d;
	}

	.cal td {
		height: 36px;
		padding: 0;
		line-height: 16px;
		text-align: center;
		vertical-align: top;
	}

	.cal .past {
		color: #bbb;
	}

	.cal i,
	.open {
		display: block;
	}

	.open {
		width: 13px;
		height: 13px;
		margin: 0 auto;
		border: 2px solid #f09a10;
		border-radius: 50%;
	}

	.cal .today {
		background: #fdfcdf;
	}

	.booking > .orange {
		width: 227px;
		height: 28px;
		margin-left: 18px;
	}

	/* footer */
	.sites {
		display: grid;
		grid-template-columns: repeat(4, 1fr);
		margin-top: 43px;
		margin-bottom: 17px;
	}

	.sites a {
		display: grid;
		justify-items: center;
		color: #999;
		font-size: 10px;
		line-height: 15px;
	}

	.sites a + a {
		border-left: 1px solid #e5e5e5;
	}

	.site-logo {
		display: flex;
		align-items: center;
		color: #222;
		font: bold 12px/22px "Noto Sans CJK JP", sans-serif;
	}

	.site-logo svg {
		width: 22px;
		height: 18px;
		margin-right: 3px;
	}

	.site-logo .yellow {
		color: #e8a62c;
	}

	.matome {
		margin-left: 4px;
		color: #4a3c20;
		font: bold 15px/20px "Open Sans", sans-serif;
	}

	.magazine {
		align-self: end;
		margin-left: -22px;
		color: #d8405c;
		font: italic 9px/9px "Liberation Serif", serif;
	}

	.jobs {
		color: #2f9ac8;
		font-size: 14px;
	}

	.links {
		padding: 20px 0 16px;
		background: #f8f6f2;
		text-align: center;
	}

	.links p {
		font-size: 9px;
		line-height: 19px;
		white-space: nowrap;
	}

	.links p a + a {
		margin-left: 5px;
		padding-left: 8px;
		border-left: 1px solid #ddd;
	}

	.confirm {
		display: block;
		margin-bottom: 13px;
		font-size: 12px;
		font-weight: bold;
		line-height: 18px;
	}

	.confirm svg {
		width: 13px;
		margin-right: 2px;
		vertical-align: -2px;
	}

	.langs {
		padding: 25px 0 26px;
		color: #999;
		text-align: center;
	}

	.langs a,
	.langs span {
		padding: 0 9px;
	}

	.langs a:first-of-type {
		padding-left: 4px;
	}

	.langs a + a,
	.langs span {
		border-left: 1px solid #e5e5e5;
	}

	footer {
		padding: 12px 0 34px;
		border-top: 1px solid #e5e2db;
	}

	footer .wrap {
		display: flex;
		justify-content: space-between;
		align-items: center;
		height: 20px;
	}

	footer .wrap > small {
		color: #999;
		font-size: 10px;
	}

	/* overlay and dialog */
	.veil,
	.stage {
		position: absolute;
		top: -2px;
		left: 0;
		right: 0;
		height: 3402px;
		background: rgb(0 0 0 / 0.5);
	}

	.inner {
		top: 16px;
		left: 18px;
		height: 3384px;
	}

	.stage {
		display: flex;
		justify-content: center;
		align-items: center;
		background: none;
	}

	.dialog {
		width: 495px;
		padding: 38px 28px 28px;
		border-radius: 3px;
		background: #fff;
		text-align: center;
	}

	.dialog .hand {
		display: block;
		width: 50px;
		height: 31px;
		margin: 0 auto;
		color: #f2a71b;
	}

	.wordmark {
		color: #000;
		font: 500 23px/26px Roboto, sans-serif;
	}

	.dialog h2 {
		margin: 18px 0 20px;
		color: #111;
		font-size: 13px;
		line-height: 20px;
	}

	.choices {
		display: grid;
		grid-template-columns: 1fr 1fr;
		gap: 9px;
	}

	.choices button {
		height: 41px;
		border: 1px solid #cfccb8;
		border-radius: 2px;
		color: #111;
		font-size: 12px;
		font-weight: bold;
	}

	.choices .english {
		grid-column: 1 / -1;
		height: 34px;
		border: 0;
		background: #82ad24;
		color: #fff;
		font-size: 13px;
	}

	.toasts {
		position: absolute;
		right: 24px;
		bottom: 9px;
		display: grid;
		gap: 9px;
	}

	.toast {
		position: relative;
		display: flex;
		gap: 8px;
		align-items: center;
		width: 146px;
		height: 62px;
		padding: 0 8px;
		background: #f8e484;
		color: #4d4526;
		font-size: 10px;
		line-height: 15px;
		white-space: nowrap;
	}

	.toast svg {
		width: 15px;
	}

	.toast b {
		font-size: 14px;
	}

	.toast button {
		position: absolute;
		top: 4px;
		right: 9px;
		color: #d3c02f;
	}
</style>
